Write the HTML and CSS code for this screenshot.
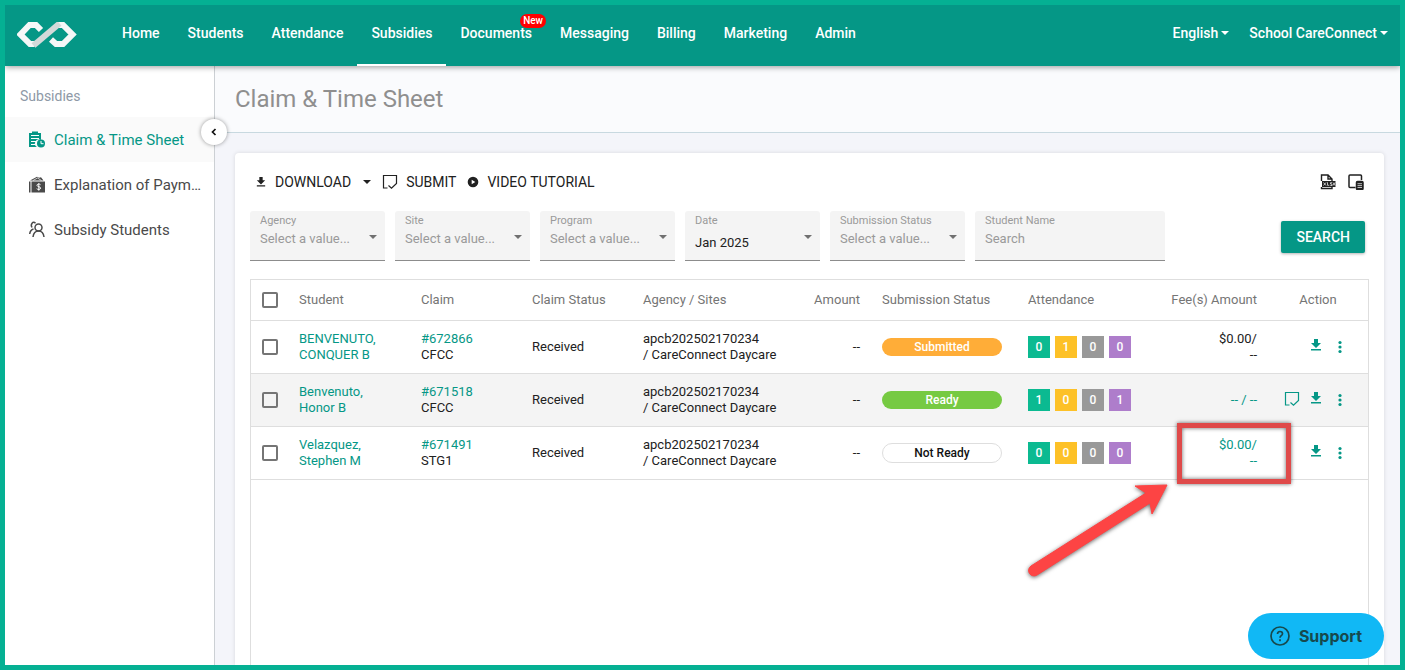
FILE: index.html
```html
<!DOCTYPE html>
<html lang="en">

<head>
    <meta charset="UTF-8">
    <meta name="viewport" content="width=device-width, initial-scale=1.0">
    <title>Claim &amp; Time Sheet</title>
    <link rel="stylesheet" href="styles.css">
</head>

<body>
    <!-- shared icons -->
    <svg class="sprite" aria-hidden="true">
        <symbol id="i-download" viewBox="0 0 12 12">
            <path d="M4 0h4v4h3L6 9 1 4h3zM1 10h10v1.5H1z" fill="currentColor" />
        </symbol>
        <symbol id="i-submit" viewBox="0 0 16 16">
            <path d="M5.500 14H1.500V1.500H14.500V9.500L9.500 14.200L6.500 11.500" fill="none" stroke="currentColor" stroke-width="1.200" />
        </symbol>
        <symbol id="i-caret" viewBox="0 0 8 4">
            <path d="M0 0h8L4 4z" fill="currentColor" />
        </symbol>
        <symbol id="i-more" viewBox="0 0 4 14">
            <g fill="currentColor">
                <circle cx="2" cy="2.500" r="1.600" />
                <circle cx="2" cy="7" r="1.600" />
                <circle cx="2" cy="11.500" r="1.600" />
            </g>
        </symbol>
    </svg>

    <header class="topbar">
        <a class="logo" href="#" aria-label="CareConnect">
            <svg width="60" height="26" viewBox="0 0 60 26" fill="none" stroke="#f5f7f7" stroke-width="6">
                <path d="M24 8L19 3H12.500L3.500 12.500L13 22H17.500" />
                <path d="M34 17.500L39 22H46L55.500 12.500L46 3H41" />
                <path d="M16.500 23.500L42.500 1.500" stroke="#d3d9d9" stroke-width="6" />
            </svg>
        </a>
        <nav class="main_nav">
            <a href="#">Home</a>
            <a href="#">Students</a>
            <a href="#">Attendance</a>
            <a href="#" class="current">Subsidies</a>
            <a href="#">Documents<span class="badge">New</span></a>
            <a href="#">Messaging</a>
            <a href="#">Billing</a>
            <a href="#">Marketing</a>
            <a href="#">Admin</a>
        </nav>
        <div class="account">
            <button type="button">English<svg class="caret"><use href="#i-caret" /></svg></button>
            <button type="button">School CareConnect<svg class="caret"><use href="#i-caret" /></svg></button>
        </div>
    </header>

    <div class="layout">
        <aside class="sidebar">
            <h2>Subsidies</h2>
            <nav class="side_nav">
                <a href="#" class="current">
                    <svg width="18" height="18" viewBox="0 0 18 18">
                        <path d="M1 2h3V.500h6V2h3v7a4 4 0 0 0-4 7H1z" fill="currentColor" />
                        <path d="M3 4.500h8M3 7.500h8M3 10.500h5M3 13.500h4" stroke="#fff" />
                        <circle cx="13" cy="12.500" r="4" fill="currentColor" />
                        <path d="M13 10v2.700h2.500" fill="none" stroke="#fff" />
                    </svg>
                    <span>Claim &amp; Time Sheet</span>
                </a>
                <a href="#">
                    <svg width="18" height="18" viewBox="0 0 18 18">
                        <path d="M1 5.500h1.500v11H1zM3.500 5.500H17v11H3.500zM2 4.500L9 .800l2 1 2-.500 2.500 3.200z" fill="currentColor" />
                        <path d="M5 4.500L9.500 2l4 2.500" fill="none" stroke="#fff" stroke-width=".700" />
                        <path d="M12.500 8.700c-1-1-3.700-.8-3.500.8s3.600.9 3.600 2.600-3 1.600-3.900.6M10.800 7.200v7.500" fill="none" stroke="#fff" />
                    </svg>
                    <span>Explanation of Paym…</span>
                </a>
                <a href="#">
                    <svg width="18" height="18" viewBox="0 0 18 18" fill="none" stroke="currentColor" stroke-width="1.500">
                        <circle cx="10.500" cy="6.500" r="3.500" />
                        <path d="M5 16c.5-4 3-6 5.500-6s5 2 5.500 6M7.500 2.200C5-.200 2 3 4 6.500M5.500 8C3 8.700 2 10.500 1.700 13" />
                    </svg>
                    <span>Subsidy Students</span>
                </a>
            </nav>
            <button type="button" class="collapse" aria-label="Collapse menu">
                <svg width="6" height="8" viewBox="0 0 6 8"><path d="M4.500 1L1.500 4l3 3" fill="none" stroke="#111" stroke-width="1.700" /></svg>
            </button>
        </aside>

        <main class="content">
            <div class="page_title">
                <h1>Claim &amp; Time Sheet</h1>
            </div>

            <section class="card">
                <div class="toolbar">
                    <button type="button"><svg class="icon_small"><use href="#i-download" /></svg>DOWNLOAD<svg class="caret"><use href="#i-caret" /></svg></button>
                    <button type="button"><svg class="icon_submit"><use href="#i-submit" /></svg>SUBMIT</button>
                    <button type="button">
                        <svg class="icon_play" viewBox="0 0 12 12"><circle cx="6" cy="6" r="5.300" fill="currentColor" /><path d="M4.700 3.700v4.600L8.300 6z" fill="#fff" /></svg>VIDEO TUTORIAL
                    </button>
                    <div class="tools">
                        <button type="button" aria-label="Export to XLSX">
                            <svg width="16" height="16" viewBox="0 0 16 16" fill="none" stroke="currentColor">
                                <path d="M1.500 7V1h6.500l4 4v2M8 1v4h4M1.500 13v1.500h10.500V13" stroke-width="1.400" />
                                <path d="M2 7h13.500v6H2z" fill="currentColor" stroke="none" />
                                <path d="M3.500 8.500l2.500 3M6 8.500l-2.500 3M7.500 8.300v3h1.800M12 8.700h-1.500v1.300H12v1.500h-1.700M13 8.500l2 3M15 8.500l-2 3" stroke="#fff" stroke-width=".700" />
                            </svg>
                        </button>
                        <button type="button" aria-label="Choose columns">
                            <svg width="16" height="16" viewBox="0 0 16 16" fill="none" stroke="currentColor" stroke-width="1.500">
                                <path d="M7.500 13.500H2a1 1 0 0 1-1-1V2a1 1 0 0 1 1-1h10.500a1 1 0 0 1 1 1v4" />
                                <rect x="8.500" y="7.500" width="6.500" height="8" rx="1" fill="currentColor" />
                                <path d="M9.500 9.700H14M9.500 11.600H14M9.500 13.500H14" stroke="#fff" stroke-width=".700" />
                            </svg>
                        </button>
                    </div>
                </div>

                <form class="filters">
                    <div class="field">
                        <label for="agency">Agency</label>
                        <select id="agency"><option>Select a value...</option></select>
                        <svg class="caret"><use href="#i-caret" /></svg>
                    </div>
                    <div class="field">
                        <label for="site">Site</label>
                        <select id="site"><option>Select a value...</option></select>
                        <svg class="caret"><use href="#i-caret" /></svg>
                    </div>
                    <div class="field">
                        <label for="program">Program</label>
                        <select id="program"><option>Select a value...</option></select>
                        <svg class="caret"><use href="#i-caret" /></svg>
                    </div>
                    <div class="field filled">
                        <label for="date">Date</label>
                        <select id="date"><option>Jan 2025</option></select>
                        <svg class="caret"><use href="#i-caret" /></svg>
                    </div>
                    <div class="field">
                        <label for="status">Submission Status</label>
                        <select id="status"><option>Select a value...</option></select>
                        <svg class="caret"><use href="#i-caret" /></svg>
                    </div>
                    <div class="field wide">
                        <label for="student">Student Name</label>
                        <input type="text" id="student" placeholder="Search">
                    </div>
                    <button type="submit" class="search">SEARCH</button>
                </form>

                <div class="table_box">
                    <table>
                        <colgroup>
                            <col class="c_check">
                            <col class="c_student">
                            <col class="c_claim">
                            <col class="c_claim">
                            <col>
                            <col class="c_amount">
                            <col class="c_status">
                            <col class="c_attendance">
                            <col class="c_fee">
                            <col class="c_action">
                        </colgroup>
                        <thead>
                            <tr>
                                <th><input type="checkbox" aria-label="Select all"></th>
                                <th>Student</th>
                                <th>Claim</th>
                                <th>Claim Status</th>
                                <th>Agency / Sites</th>
                                <th class="right">Amount</th>
                                <th>Submission Status</th>
                                <th>Attendance</th>
                                <th class="right">Fee(s) Amount</th>
                                <th class="center">Action</th>
                            </tr>
                        </thead>
                        <tbody>
                            <tr>
                                <td><input type="checkbox" aria-label="Select BENVENUTO, CONQUER B"></td>
                                <td><a href="#">BENVENUTO,<br>CONQUER B</a></td>
                                <td><a href="#">#672866</a><br>CFCC</td>
                                <td>Received</td>
                                <td>apcb202502170234<br>/ CareConnect Daycare</td>
                                <td class="right">--</td>
                                <td><span class="pill submitted">Submitted</span></td>
                                <td><div class="counts"><span>0</span><span>1</span><span>0</span><span>0</span></div></td>
                                <td class="right">$0.00/<br>--</td>
                                <td>
                                    <div class="actions">
                                        <button type="button" aria-label="Download"><svg class="icon_small"><use href="#i-download" /></svg></button>
                                        <button type="button" aria-label="More"><svg class="icon_more"><use href="#i-more" /></svg></button>
                                    </div>
                                </td>
                            </tr>
                            <tr>
                                <td><input type="checkbox" aria-label="Select Benvenuto, Honor B"></td>
                                <td><a href="#">Benvenuto,<br>Honor B</a></td>
                                <td><a href="#">#671518</a><br>CFCC</td>
                                <td>Received</td>
                                <td>apcb202502170234<br>/ CareConnect Daycare</td>
                                <td class="right">--</td>
                                <td><span class="pill ready">Ready</span></td>
                                <td><div class="counts"><span>1</span><span>0</span><span>0</span><span>1</span></div></td>
                                <td class="right"><a href="#">-- / --</a></td>
                                <td>
                                    <div class="actions">
                                        <button type="button" aria-label="Submit"><svg class="icon_submit"><use href="#i-submit" /></svg></button>
                                        <button type="button" aria-label="Download"><svg class="icon_small"><use href="#i-download" /></svg></button>
                                        <button type="button" aria-label="More"><svg class="icon_more"><use href="#i-more" /></svg></button>
                                    </div>
                                </td>
                            </tr>
                            <tr>
                                <td><input type="checkbox" aria-label="Select Velazquez, Stephen M"></td>
                                <td><a href="#">Velazquez,<br>Stephen M</a></td>
                                <td><a href="#">#671491</a><br>STG1</td>
                                <td>Received</td>
                                <td>apcb202502170234<br>/ CareConnect Daycare</td>
                                <td class="right">--</td>
                                <td><span class="pill not_ready">Not Ready</span></td>
                                <td><div class="counts"><span>0</span><span>0</span><span>0</span><span>0</span></div></td>
                                <td class="right marked">
                                    <a href="#">$0.00/<br>--</a>
                                    <div class="callout">
                                        <svg width="150" height="104" viewBox="0 0 150 104">
                                            <path d="M145 5L113 6L124 13L9 86A5 5 0 0 0 15 95L128 23L130 34Z" fill="#fd4444" stroke="#fd4444" stroke-linejoin="round" />
                                        </svg>
                                    </div>
                                </td>
                                <td>
                                    <div class="actions">
                                        <button type="button" aria-label="Download"><svg class="icon_small"><use href="#i-download" /></svg></button>
                                        <button type="button" aria-label="More"><svg class="icon_more"><use href="#i-more" /></svg></button>
                                    </div>
                                </td>
                            </tr>
                        </tbody>
                    </table>
                </div>
            </section>
        </main>
    </div>

    <button type="button" class="support">
        <svg width="20" height="20" viewBox="0 0 20 20" fill="none" stroke="currentColor" stroke-width="1.700">
            <circle cx="10" cy="10" r="9" />
            <path d="M7.500 8c0-3.300 5-3.300 5-.3 0 2-2.500 2-2.500 4" />
            <path d="M10 13.300v2" />
        </svg>
        Support
    </button>
</body>

</html>
```

FILE: styles.css
```css
* {
    margin: 0px;
    padding: 0px;
    box-sizing: border-box;
}

body {
    height: 100vh;
    display: flex;
    flex-direction: column;
    overflow: hidden;
    border: 5px solid #05b093;
    font-family: Roboto, "Liberation Sans", sans-serif;
    font-size: 13px;
    color: #212121;
    background-color: #fff;
}

a {
    color: #059786;
    text-decoration: none;
}

button,
input,
select {
    font: inherit;
    color: inherit;
    border: none;
    background: none;
}

button {
    cursor: pointer;
}

svg {
    display: block;
    flex-shrink: 0;
}

.sprite {
    position: absolute;
    width: 0px;
    height: 0px;
}

.caret {
    width: 8px;
    height: 4px;
}

.icon_small,
.icon_play {
    width: 12px;
    height: 12px;
}

.icon_submit {
    width: 16px;
    height: 16px;
}

.icon_more {
    width: 4px;
    height: 14px;
}


/* ------------------------- top bar ------------------------- */
.topbar {
    height: 61px;
    flex-shrink: 0;
    display: flex;
    position: relative;
    z-index: 2;
    padding: 0px 12px;
    color: #fff;
    font-size: 14px;
    font-weight: 500;
    background-color: #059786;
    box-shadow: 0px 1px 6px rgba(0, 0, 0, 0.4);
}

.logo {
    width: 91px;
    padding-top: 17px;
}

.main_nav {
    display: flex;
    flex: 1;
}

.main_nav a {
    position: relative;
    padding: 0px 14px;
    line-height: 57px;
    color: #fff;
}

.main_nav .current {
    border-bottom: 2px solid #fff;
}

.badge {
    position: absolute;
    top: 9px;
    right: 0px;
    padding: 0px 3px;
    border-radius: 7px;
    font-size: 10px;
    line-height: 14px;
    background-color: #f00;
}

.account {
    display: flex;
    gap: 20px;
    height: 56px;
}

.account button {
    display: flex;
    align-items: center;
    gap: 3px;
}


/* ------------------------- sidebar ------------------------- */
.layout {
    flex: 1;
    display: flex;
    min-height: 0px;
}

.sidebar {
    position: relative;
    width: 210px;
    flex-shrink: 0;
    border-right: 1px solid #ccd0d4;
}

.sidebar h2 {
    padding: 19px 15px 10px;
    font-size: 14px;
    font-weight: 400;
    line-height: 22px;
    color: #8e99a6;
}

.side_nav a {
    display: flex;
    align-items: center;
    gap: 8px;
    height: 45px;
    padding: 0px 8px 0px 23px;
    font-size: 15px;
    white-space: nowrap;
    color: #4a4a4a;
}

.side_nav .current {
    color: #059786;
    background-color: #fafafa;
}

.collapse {
    position: absolute;
    top: 53px;
    right: -13px;
    width: 26px;
    height: 26px;
    z-index: 1;
    display: flex;
    align-items: center;
    justify-content: center;
    border-radius: 50%;
    background-color: #fff;
    box-shadow: 0px 0px 4px rgba(0, 0, 0, 0.4);
}


/* ------------------------- content ------------------------- */
.content {
    flex: 1;
    min-width: 0px;
    display: flex;
    flex-direction: column;
    background-color: #f4f5fa;
}

.page_title {
    padding: 18px 20px;
    border-bottom: 1px solid #c8d9e0;
    background-color: #fafbfd;
}

h1 {
    font-size: 24px;
    font-weight: 400;
    line-height: 30px;
    color: #8f8f8f;
}

.card {
    flex: 1;
    display: flex;
    flex-direction: column;
    min-height: 0px;
    margin: 20px 16px 0px 20px;
    padding: 15px 15px 0px;
    border-radius: 4px 4px 0px 0px;
    background-color: #fff;
    box-shadow: 0px 0px 4px rgba(0, 0, 0, 0.12);
}

.toolbar {
    display: flex;
    align-items: center;
    gap: 11px;
    height: 28px;
    padding: 0px 5px;
}

.toolbar button {
    display: flex;
    align-items: center;
    gap: 8px;
    font-size: 14px;
}

.toolbar .icon_small {
    padding: 1px;
}

.toolbar .caret {
    margin-left: 4px;
}

.tools {
    display: flex;
    gap: 12px;
    margin-left: auto;
}


/* ------------------------- filters ------------------------- */
.filters {
    display: flex;
    gap: 10px;
    margin-top: 15px;
    padding-right: 4px;
}

.field {
    position: relative;
    width: 135px;
    height: 50px;
    border-bottom: 1px solid #8c8c8c;
    border-radius: 3px 3px 0px 0px;
    color: #9a9a9a;
    background-color: #f4f4f4;
}

.wide {
    width: 190px;
}

.field label {
    position: absolute;
    top: 3px;
    left: 10px;
    font-size: 11px;
    line-height: 14px;
}

.field select,
.field input {
    width: 100%;
    height: 49px;
    padding: 16px 10px 10px;
    appearance: none;
    outline: none;
}

.field input::placeholder {
    color: #9a9a9a;
}

.filled select {
    padding: 20px 10px 6px;
    color: #212121;
}

.field .caret {
    position: absolute;
    top: 24px;
    right: 8px;
    color: #707070;
    pointer-events: none;
}

.search {
    align-self: center;
    height: 32px;
    margin: 2px 0px 0px auto;
    padding: 0px 15px;
    border-radius: 2px;
    font-size: 14px;
    font-weight: 500;
    color: #fff;
    background-color: #059786;
    box-shadow: 0px 1px 3px rgba(0, 0, 0, 0.3);
}


/* ------------------------- table ------------------------- */
.table_box {
    flex: 1;
    margin-top: 18px;
    border: 1px solid #dedede;
    border-bottom: none;
}

table {
    width: 100%;
    table-layout: fixed;
    border-collapse: collapse;
}

.c_check {
    width: 37px;
}

.c_student {
    width: 122px;
}

.c_claim {
    width: 111px;
}

.c_amount {
    width: 68px;
}

.c_status {
    width: 146px;
}

.c_attendance {
    width: 143px;
}

.c_fee {
    width: 108px;
}

.c_action {
    width: 100px;
}

tr {
    height: 53px;
    border-bottom: 1px solid #dedede;
}

thead tr {
    height: 40px;
}

tbody tr:nth-child(even) {
    background-color: #f4f4f4;
}

th,
td {
    padding: 0px 11px;
    line-height: 16px;
    text-align: left;
    vertical-align: middle;
}

th {
    font-weight: 400;
    color: #757575;
    white-space: nowrap;
}

.right {
    text-align: right;
}

.center {
    text-align: center;
}

input[type="checkbox"] {
    display: block;
    width: 16px;
    height: 16px;
    appearance: none;
    border: 2px solid #757575;
    border-radius: 2px;
}

.pill {
    display: block;
    width: 120px;
    border-radius: 10px;
    line-height: 18px;
    font-size: 12px;
    font-weight: 500;
    text-align: center;
    color: #fff;
}

.submitted {
    background-color: #ffad38;
}

.ready {
    background-color: #76ca42;
}

.not_ready {
    border: 1px solid #dedede;
    color: #111;
    background-color: #fff;
}

.counts {
    display: flex;
    gap: 5px;
}

.counts span {
    width: 22px;
    font-size: 12px;
    font-weight: 500;
    line-height: 22px;
    text-align: center;
    color: #fff;
    background-color: #0bba91;
}

.counts span:nth-child(2) {
    background-color: #fdc127;
}

.counts span:nth-child(3) {
    background-color: #999;
}

.counts span:nth-child(4) {
    background-color: #ae7dcb;
}

.actions {
    display: flex;
    align-items: center;
    justify-content: flex-end;
    gap: 10px;
    padding-right: 15px;
}

.actions button {
    color: #059786;
}

.actions .icon_small {
    margin-bottom: 4px;
}

.actions .icon_submit {
    margin-bottom: 2px;
}

.actions .icon_more {
    margin-left: 6px;
}


/* ------------------------- callout over the fee ------------------------- */
.marked {
    position: relative;
}

.callout {
    position: absolute;
    top: -4px;
    left: 17px;
    right: -23px;
    bottom: -5px;
    border: 5px solid #df4a4a;
    box-shadow: 0px 0px 4px rgba(0, 0, 0, 0.6), inset 0px 0px 4px rgba(0, 0, 0, 0.6);
    pointer-events: none;
}

.callout svg {
    position: absolute;
    top: 52px;
    right: 114px;
    filter: drop-shadow(0px 1px 2px rgba(0, 0, 0, 0.6));
}


/* ------------------------- support ------------------------- */
.support {
    position: fixed;
    right: 21px;
    bottom: 11px;
    display: flex;
    align-items: center;
    gap: 9px;
    height: 46px;
    padding: 0px 22px;
    border-radius: 23px;
    font-family: Inter, "Open Sans", sans-serif;
    font-size: 16px;
    font-weight: 700;
    color: #17494d;
    background-color: #11b8f5;
}
```
